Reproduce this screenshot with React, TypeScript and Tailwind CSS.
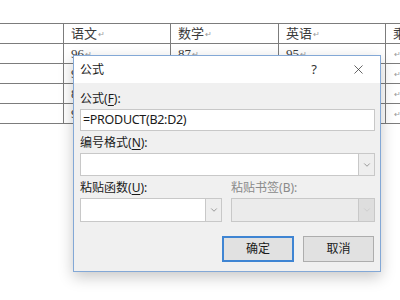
import { ChevronDown, X } from "lucide-react"

const rows = [
    ["", "语文", "数学", "英语", "乘积"],
    ["", "96", "87", "95", ""],
    ["", "92", "85", "90", ""],
    ["", "88", "91", "86", ""],
    ["", "94", "89", "93", ""],
]

export default function App () {
    return (
        <div className="relative w-[400px] h-[300px] overflow-hidden bg-white">
            {/* Word table behind the dialog */}
            <div className="pt-[23px] w-[520px]">
                {rows.map((row, r) => (
                    <div
                        key={r}
                        className={`grid grid-cols-[63px_107px_108px_107px_107px] border-t border-[#7c7c7c] ${r === rows.length - 1 ? "border-b" : ""}`}
                    >
                        {row.map((cell, c) => (
                            <div
                                key={c}
                                className={`h-[19px] flex items-center pl-[7px] text-[13px] text-[#3a3a3a] font-['Liberation_Serif','Noto_Sans_CJK_SC',serif] ${c > 0 ? "border-l border-[#7c7c7c]" : ""}`}
                            >
                                {c > 0 && (
                                    <>
                                        {cell}
                                        <span className="text-[8px] text-[#9a9a9a] ml-px mt-[3px]">↵</span>
                                    </>
                                )}
                            </div>
                        ))}
                    </div>
                ))}
            </div>

            {/* Formula dialog */}
            <div className="absolute left-[73px] top-[55px] w-[308px] h-[217px] border border-[#83a8d6] bg-[#f0f0f0] shadow-[0_5px_14px_rgba(0,0,0,0.22)] flex flex-col font-['Noto_Sans','Noto_Sans_CJK_SC',sans-serif] text-[12px] text-[#1a1a1a]">
                {/* Title bar */}
                <div className="h-[27px] bg-white flex items-center pl-[6px] pr-[14px]">
                    <span className="flex-1 pt-px">公式</span>
                    <span className="text-[13px] text-[#333] mr-[34px]">?</span>
                    <X size={15} strokeWidth={1.2} className="text-[#333]" />
                </div>

                <div className="flex flex-col pl-[6px] pr-[5px] pt-[8px]">
                    <Label text="公式" k="F" />
                    <div className="mt-[2px] h-[22px] bg-white border border-[#c8c8c8] flex items-center px-[2px] text-[12.5px] tracking-[-0.3px] font-['Noto_Sans',sans-serif]">
                        =PRODUCT(B2:D2)
                    </div>

                    <div className="mt-[4px]"><Label text="编号格式" k="N" /></div>
                    <Combo className="mt-[2px] h-[23px]" />

                    <div className="mt-[4px] flex">
                        <div className="w-[142px]">
                            <Label text="粘贴函数" k="U" />
                            <Combo className="mt-[2px] h-[24px]" />
                        </div>
                        <div className="ml-[9px] flex-1">
                            <Label text="粘贴书签" k="B" disabled />
                            <Combo className="mt-[2px] h-[24px]" disabled />
                        </div>
                    </div>

                    <div className="mt-[14px] flex justify-end gap-[9px] pr-px">
                        <button className="w-[72px] h-[26px] bg-[#e1e1e1] border-2 border-[#3f85d3] text-[12px]">确定</button>
                        <button className="w-[71px] h-[26px] bg-[#e1e1e1] border border-[#adadad] text-[12px]">取消</button>
                    </div>
                </div>
            </div>
        </div>
    )
}

function Label ({ text, k, disabled }: { text: string; k: string; disabled?: boolean }) {
    return (
        <div className={`h-[16px] leading-[16px] ${disabled ? "text-[#8a8a8a]" : ""}`}>
            {text}(
            {disabled ? k : <span className="underline underline-offset-2">{k}</span>}
            ):
        </div>
    )
}

function Combo ({ className, disabled }: { className: string; disabled?: boolean }) {
    return (
        <div className={`flex border border-[#c8c8c8] ${disabled ? "bg-[#ebebeb]" : "bg-white"} ${className}`}>
            <div className="flex-1" />
            <div className={`w-[16px] flex items-center justify-center border-l border-[#c8c8c8] ${disabled ? "bg-[#dedede]" : "bg-[#eeeeee]"}`}>
                <ChevronDown size={10} strokeWidth={1.5} className={disabled ? "text-[#c4c4c4]" : "text-[#666]"} />
            </div>
        </div>
    )
}
